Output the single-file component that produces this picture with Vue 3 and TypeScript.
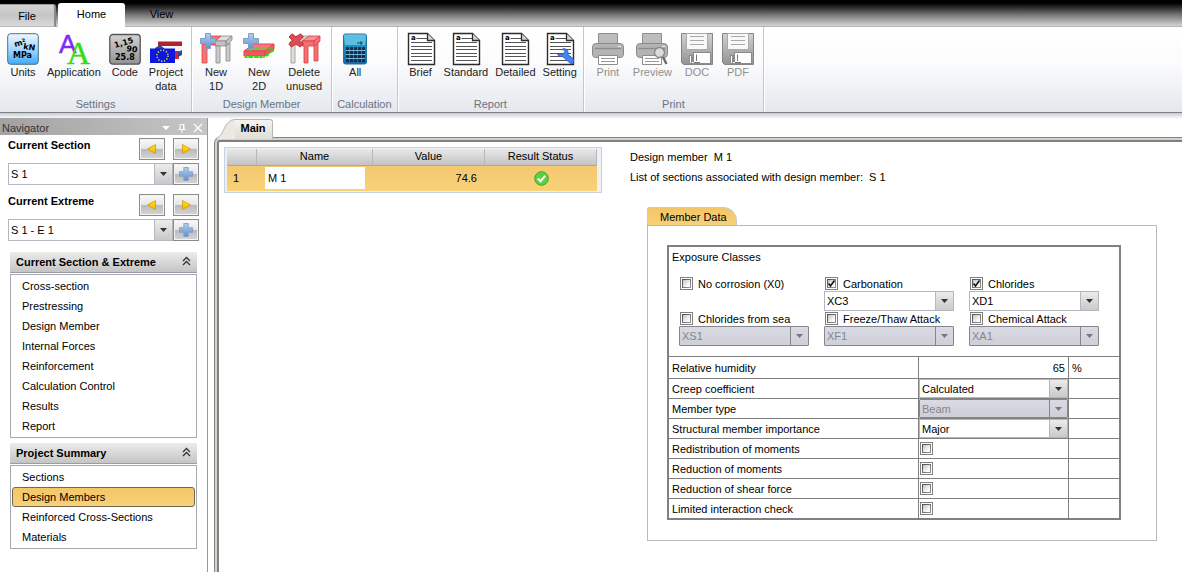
<script setup lang="ts">
import { reactive, ref } from 'vue'

interface Command { icon: string; lines: string[]; disabled?: boolean }
interface Group { title: string; commands: Command[]; spacing?: string }

const groups: Group[] = [
  {
    title: 'Settings',
    commands: [
      { icon: 'units', lines: ['Units'] },
      { icon: 'application', lines: ['Application'] },
      { icon: 'code', lines: ['Code'] },
      { icon: 'project', lines: ['Project', 'data'] },
    ],
  },
  {
    title: 'Design Member',
    spacing: 'wide',
    commands: [
      { icon: 'new1d', lines: ['New', '1D'] },
      { icon: 'new2d', lines: ['New', '2D'] },
      { icon: 'delete', lines: ['Delete', 'unused'] },
    ],
  },
  { title: 'Calculation', commands: [{ icon: 'calculator', lines: ['All'] }] },
  {
    title: 'Report',
    spacing: 'narrow',
    commands: [
      { icon: 'document', lines: ['Brief'] },
      { icon: 'document', lines: ['Standard'] },
      { icon: 'document', lines: ['Detailed'] },
      { icon: 'setting', lines: ['Setting'] },
    ],
  },
  {
    title: 'Print',
    spacing: 'loose',
    commands: [
      { icon: 'printer', lines: ['Print'], disabled: true },
      { icon: 'preview', lines: ['Preview'], disabled: true },
      { icon: 'floppy', lines: ['DOC'], disabled: true },
      { icon: 'floppy', lines: ['PDF'], disabled: true },
    ],
  },
]

const selectors = [
  { id: 'section', label: 'Current Section', value: 'S 1' },
  { id: 'extreme', label: 'Current Extreme', value: 'S 1 - E 1' },
]

const menus = reactive([
  {
    title: 'Current Section & Extreme',
    open: true,
    items: ['Cross-section', 'Prestressing', 'Design Member', 'Internal Forces', 'Reinforcement', 'Calculation Control', 'Results', 'Report'],
  },
  {
    title: 'Project Summary',
    open: true,
    items: ['Sections', 'Design Members', 'Reinforced Cross-Sections', 'Materials'],
  },
])
const current = ref('Design Members')
const memberName = ref('M 1')

const exposures = reactive([
  { id: 'x0', label: 'No corrosion (X0)', on: false, value: '' },
  { id: 'xc', label: 'Carbonation', on: true, value: 'XC3' },
  { id: 'xd', label: 'Chlorides', on: true, value: 'XD1' },
  { id: 'xs', label: 'Chlorides from sea', on: false, value: 'XS1' },
  { id: 'xf', label: 'Freeze/Thaw Attack', on: false, value: 'XF1' },
  { id: 'xa', label: 'Chemical Attack', on: false, value: 'XA1' },
])

const humidity = ref('65')
const choices = [
  { id: 'creep', label: 'Creep coefficient', value: 'Calculated', disabled: false },
  { id: 'type', label: 'Member type', value: 'Beam', disabled: true },
  { id: 'importance', label: 'Structural member importance', value: 'Major', disabled: false },
]
const flags = reactive([
  { id: 'redist', label: 'Redistribution of moments', on: false },
  { id: 'redmom', label: 'Reduction of moments', on: false },
  { id: 'redshear', label: 'Reduction of shear force', on: false },
  { id: 'limited', label: 'Limited interaction check', on: false },
])
</script>

<template>
  <div class="app">
    <svg class="defs" width="0" height="0" aria-hidden="true">
      <defs>
        <linearGradient id="gBlue" x1="0" y1="0" x2="0" y2="1"><stop offset="0" stop-color="#eef8ff" /><stop offset="0.5" stop-color="#a5d8ff" /><stop offset="1" stop-color="#3fa9fb" /></linearGradient>
        <linearGradient id="gGrey" x1="0" y1="0" x2="0" y2="1"><stop offset="0" stop-color="#d2d2d2" /><stop offset="1" stop-color="#929292" /></linearGradient>
        <linearGradient id="gPlus" x1="0" y1="0" x2="0" y2="1"><stop offset="0" stop-color="#b4cfee" /><stop offset="1" stop-color="#6090cb" /></linearGradient>
        <linearGradient id="gCalc" x1="0" y1="0" x2="0" y2="1"><stop offset="0" stop-color="#7fd0ea" /><stop offset="0.35" stop-color="#1f93c4" /><stop offset="1" stop-color="#1565a8" /></linearGradient>
        <linearGradient id="gGold" x1="0" y1="0" x2="0" y2="1"><stop offset="0" stop-color="#ffe600" /><stop offset="1" stop-color="#f5b400" /></linearGradient>
        <g id="sheet">
          <path d="M3.500 .5H22.500L29.500 7.500V31.500H3.500Z" fill="#fff" stroke="#2b2b2b" stroke-width="1.400" />
          <path d="M22.500 .5V7.500H29.500" fill="#d8d8d8" stroke="#2b2b2b" stroke-width="1.300" />
          <path d="M11.500 5.500H22M6 9.500H27M6 13.500H27M6 16.500H27M6 20.500H27M6 23.500H27M6 27.500H27" stroke="#555" />
        </g>
        <g id="printerShape">
          <path d="M6.500 .5H25.500V11H6.500Z" fill="#bcbcbc" stroke="#8d8d8d" />
          <path d="M4 10.500H28Q31.500 10.500 31.500 14V21Q31.500 24.500 28 24.500H4Q.5 24.500 .5 21V14Q.5 10.500 4 10.500Z" fill="#b4b4b4" stroke="#8a8a8a" />
          <path d="M2.500 15.500H29.500" stroke="#8d8d8d" stroke-width="1.400" />
          <path d="M6.500 22.500H25.500V31.500H6.500Z" fill="#fff" stroke="#8d8d8d" />
          <path d="M9 25.500H23M9 28.500H23" stroke="#999" />
          <path d="M26 13.500H29" stroke="#eee" />
        </g>
        <g id="plusShape"><path d="M5.500 .5H10.500V5.500H15.500V10.500H10.500V15.500H5.500V10.500H.5V5.500H5.500Z" fill="url(#gPlus)" stroke="#7f9dc6" /></g>
      </defs>
    </svg>

    <nav class="tabs" aria-label="Ribbon tabs">
      <button type="button" class="tab file">File</button>
      <button type="button" class="tab home">Home</button>
      <button type="button" class="tab view">View</button>
    </nav>

    <header class="ribbon">
      <section v-for="g in groups" :key="g.title" class="group">
        <div class="commands" :class="g.spacing">
          <button v-for="c in g.commands" :key="c.lines[0]" type="button" class="command" :disabled="c.disabled">
            <svg width="32" height="32" viewBox="0 0 32 32" aria-hidden="true">
              <g v-if="c.icon === 'units'" class="glyphs">
                <rect x=".7" y=".7" width="30.600" height="30.600" rx="3" fill="url(#gBlue)" stroke="#4c7186" />
                <text x="8" y="14" transform="rotate(-16 8 14)">m²</text>
                <text x="16" y="16" transform="rotate(8 16 16)">kN</text>
                <text x="6" y="25">MPa</text>
              </g>
              <g v-else-if="c.icon === 'application'">
                <text x="1" y="20" class="sans-a">A</text>
                <text x="9" y="31" class="serif-a">A</text>
              </g>
              <g v-else-if="c.icon === 'code'" class="glyphs">
                <rect x=".8" y="1.500" width="30.400" height="29.700" rx="3" fill="url(#gGrey)" stroke="#555" stroke-width="1.300" />
                <text x="6" y="15" transform="rotate(-16 6 15)">1,15</text>
                <text x="17" y="18" transform="rotate(9 17 18)">90</text>
                <text x="6" y="27">25.8</text>
              </g>
              <g v-else-if="c.icon === 'project'">
                <path d="M8 8.500H32V13H8Z" fill="#b0222f" /><path d="M11 13H32V18H11Z" fill="#f3f3f3" />
                <path d="M26 18H29V26H25V18Z" fill="#d8222f" /><path d="M28 19L32 17V22L28 24Z" fill="#244a9b" />
                <path d="M5 15L10 12L15 16V18H5Z" fill="#244a9b" />
                <path d="M0 15.500H25V30H0Z" fill="#0d18dc" />
                <circle cx="12.500" cy="22.700" r="5.500" fill="none" stroke="#e8dd3c" stroke-width="1.500" stroke-dasharray="1.200 1.680" />
              </g>
              <g v-else-if="c.icon === 'new1d'">
                <path d="M15 8L21 3H32L26 8Z" fill="#ddd" stroke="#8b8b8b" stroke-width=".8" />
                <path d="M15 8H26V13H15ZM26 8L32 3V7L26 13Z" fill="#c2c2c2" stroke="#888" stroke-width=".8" />
                <path d="M16 13H20V30H16ZM26 13L30 10V28H26Z" fill="#cacaca" stroke="#888" stroke-width=".8" />
                <path d="M2 9L8 3H21L15 8V12H7V30H2Z" fill="#f57377" stroke="#d8444b" stroke-width=".8" />
                <path d="M2 11H15" stroke="#d8444b" />
                <use href="#plusShape" />
              </g>
              <g v-else-if="c.icon === 'new2d'">
                <path d="M1 18L11 11H31L22 18Z" fill="#f57a7e" stroke="#e04850" />
                <path d="M1 18H22V23H1ZM22 18L31 11V16L22 23Z" fill="#f0585f" stroke="#e04850" />
                <path d="M7 18L12 15H30M2 24H22L31 17" stroke="#33e51b" fill="none" stroke-width="1.400" stroke-dasharray="2 1" />
                <path d="M1 25L3 22L5 25ZM6 25L8 22L10 25ZM11 25L13 22L15 25ZM16 25L18 22L20 25ZM22 23L24 20L26 23ZM27 19L29 16L31 19Z" fill="#25e00f" />
                <use href="#plusShape" />
              </g>
              <g v-else-if="c.icon === 'delete'">
                <path d="M2 9L8 3H22L16 8V12H7V30H3V12H2Z" fill="#e2dfd9" stroke="#96938d" stroke-width=".8" />
                <path d="M14 8L21 3H32L26 8Z" fill="#fa9295" stroke="#d53e45" stroke-width=".8" />
                <path d="M14 8H26L32 3V8L30 10V28H26V13H20V30H16V13H14Z" fill="#f66f74" stroke="#d53e45" stroke-width=".8" />
                <path d="M26 8V13L32 8" fill="none" stroke="#d53e45" stroke-width=".8" />
                <path d="M1 4L4 .8L8 4L12.500 .8L15.500 4L11.500 7.500L15.500 11L12 14L8 10.800L3.500 14L.8 11L4.500 7.500Z" fill="#dc4c52" stroke="#b83238" />
              </g>
              <g v-else-if="c.icon === 'calculator'">
                <rect x="4.500" y="1" width="23" height="30" rx="2" fill="url(#gCalc)" stroke="#1a74a4" />
                <path d="M6 2.500H26V12H6Z" fill="#5cbfe0" /><path d="M18 10H24M22 8V12" stroke="#0f4568" />
                <g fill="#12304e">
                  <template v-for="r in 4" :key="r">
                    <rect v-for="k in 5" :key="k" :x="3 + k * 4" :y="10 + r * 4" width="3" height="3" rx=".6" />
                  </template>
                </g>
                <path d="M7 17.500H26M7 21.500H26M7 25.500H26" stroke="#9fd0e6" stroke-width=".7" />
              </g>
              <g v-else-if="c.icon === 'document'">
                <use href="#sheet" /><text x="6" y="7" class="doc-a">a</text>
              </g>
              <g v-else-if="c.icon === 'setting'">
                <use href="#sheet" /><text x="6" y="7" class="doc-a">a</text>
                <path d="M13.500 21Q14.500 24 18.500 23.500L26.500 30.500H29.500V26L24 21.500Q25 17 20.500 15.500L18.500 16L21 18.500L19 21.500Z" fill="#4583f2" stroke="#2a55b8" stroke-width=".8" />
              </g>
              <use v-else-if="c.icon === 'printer'" href="#printerShape" />
              <g v-else-if="c.icon === 'preview'">
                <use href="#printerShape" />
                <path d="M27 24L30.500 31" stroke="#696969" stroke-width="2.400" />
                <circle cx="23.500" cy="19.500" r="5" fill="#dcdcdc" stroke="#888" stroke-width="1.400" />
              </g>
              <g v-else>
                <path d="M.5 .5H31.500V31.500H2.500L.5 29.500Z" fill="url(#gGrey)" stroke="#858585" />
                <path d="M5.500 .5H26.500V16.500H5.500Z" fill="#f8f8f8" stroke="#aaa" />
                <path d="M9 3.500H23M9 7.500H23M9 11.500H23" stroke="#aaa" />
                <path d="M8 22H12V19H30V31H8Z" fill="#8b8b8b" />
                <path d="M13 20H29V30H13Z" fill="#fff" />
                <path d="M9.500 23V30M15.500 21.500V28M11 29.500H19" stroke="#fff" />
                <path d="M15.500 21.500V28M13 29.500H19" stroke="#777" />
              </g>
            </svg>
            <span v-for="l in c.lines" :key="l">{{ l }}</span>
          </button>
        </div>
        <h2>{{ g.title }}</h2>
      </section>
    </header>

    <div class="body">
      <aside class="navigator">
        <div class="nav-head">
          <span>Navigator</span>
          <button type="button" aria-label="Window menu"><svg width="10" height="10" viewBox="0 0 10 10"><path d="M1 3H9L5 7Z" fill="#fff" /></svg></button>
          <button type="button" aria-label="Pin"><svg width="10" height="10" viewBox="0 0 10 10"><path d="M3 6V1.500H7V6M1.500 6.500H8.500M5 7V10M6.500 1V6" fill="none" stroke="#fff" /></svg></button>
          <button type="button" aria-label="Close"><svg width="10" height="10" viewBox="0 0 10 10"><path d="M1 1L9 9M9 1L1 9" stroke="#fff" stroke-width="1.300" /></svg></button>
        </div>

        <div class="pickers">
          <div v-for="s in selectors" :key="s.id" class="picker">
            <label :for="s.id">{{ s.label }}</label>
            <button type="button" class="tool" aria-label="Previous"><svg width="12" height="12" viewBox="0 0 12 12"><path d="M1.500 6L9.500 1.500V10.500Z" fill="url(#gGold)" stroke="#d09a10" stroke-width=".8" /></svg></button>
            <button type="button" class="tool" aria-label="Next"><svg width="12" height="12" viewBox="0 0 12 12"><path d="M10.500 6L2.500 1.500V10.500Z" fill="url(#gGold)" stroke="#d09a10" stroke-width=".8" /></svg></button>
            <span class="combo tall">
              <select :id="s.id"><option>{{ s.value }}</option></select>
              <svg width="17" height="10" viewBox="0 0 17 10" aria-hidden="true"><path d="M5 3H12L8.500 7Z" /></svg>
            </span>
            <button type="button" class="tool add" aria-label="Add"><svg width="14" height="14" viewBox="0 0 16 16"><use href="#plusShape" /></svg></button>
          </div>
        </div>

        <section v-for="m in menus" :key="m.title" class="menu">
          <button type="button" class="menu-head" :aria-expanded="m.open" @click="m.open = !m.open">
            {{ m.title }}
            <svg width="9" height="12" viewBox="0 0 9 12" aria-hidden="true"><path d="M1 5L4.500 1.500L8 5M1 9L4.500 5.500L8 9" fill="none" stroke="#333" stroke-width="1.300" /></svg>
          </button>
          <ul v-if="m.open">
            <li v-for="i in m.items" :key="i">
              <a href="#" :class="{ current: i === current }" @click.prevent="current = i">{{ i }}</a>
            </li>
          </ul>
        </section>
      </aside>

      <main>
        <div class="doc-tab">
          <svg width="18" height="20" viewBox="0 0 18 20" aria-hidden="true">
            <path d="M0 20V19C7 18 7 .5 18 .5V20Z" fill="#ebe9e4" />
            <path d="M0 19C7 17 7 .5 18 .5" fill="none" stroke="#b9b5ac" />
          </svg>
          <button type="button">Main</button>
        </div>
        <div class="frame">
          <div class="workspace">
            <div class="list">
              <table>
                <colgroup><col class="c-num" /><col class="c-name" /><col class="c-value" /><col class="c-status" /></colgroup>
                <thead>
                  <tr><th></th><th>Name</th><th>Value</th><th>Result Status</th></tr>
                </thead>
                <tbody>
                  <tr>
                    <td>1</td>
                    <td><input v-model="memberName" type="text" aria-label="Name" /></td>
                    <td class="num">74.6</td>
                    <td class="status">
                      <svg width="15" height="15" viewBox="0 0 15 15" role="img" aria-label="Passed"><circle cx="7.500" cy="7.500" r="6.800" fill="#5fce3f" stroke="#3fa52b" /><path d="M3.800 7.500L6.500 10.200L11.200 4.800" fill="none" stroke="#fff" stroke-width="2" /></svg>
                    </td>
                  </tr>
                </tbody>
              </table>
            </div>

            <div class="details">
              <p>Design member&nbsp; M 1</p>
              <p>List of sections associated with design member:&nbsp; S 1</p>

              <section class="member">
                <button type="button" class="member-tab">Member Data</button>
                <div class="panel">
                  <div class="sheet">
                    <h3>Exposure Classes</h3>
                    <div class="exposures">
                      <div v-for="e in exposures" :key="e.id" class="exposure">
                        <label>
                          <span class="tick"><input v-model="e.on" type="checkbox" /><svg v-if="e.on" width="9" height="9" viewBox="0 0 9 9" aria-hidden="true"><path d="M1.500 4.500L3.500 7L7.500 1.500" fill="none" stroke="#111" stroke-width="1.600" /></svg></span>
                          {{ e.label }}
                        </label>
                        <span v-if="e.value" class="combo" :class="{ off: !e.on }">
                          <select :aria-label="e.label + ' class'" :disabled="!e.on"><option>{{ e.value }}</option></select>
                          <svg width="17" height="10" viewBox="0 0 17 10" aria-hidden="true"><path d="M5 3H12L8.500 7Z" /></svg>
                        </span>
                      </div>
                    </div>
                    <table class="props">
                      <colgroup><col /><col class="c-field" /><col class="c-unit" /></colgroup>
                      <tbody>
                        <tr class="first">
                          <td><label for="humidity">Relative humidity</label></td>
                          <td><input id="humidity" v-model="humidity" type="text" class="amount" /></td>
                          <td>%</td>
                        </tr>
                        <tr v-for="c in choices" :key="c.id">
                          <td><label :for="c.id">{{ c.label }}</label></td>
                          <td>
                            <span class="combo cell" :class="{ off: c.disabled }">
                              <select :id="c.id" :disabled="c.disabled"><option>{{ c.value }}</option></select>
                              <svg width="17" height="10" viewBox="0 0 17 10" aria-hidden="true"><path d="M5 3H12L8.500 7Z" /></svg>
                            </span>
                          </td>
                          <td></td>
                        </tr>
                        <tr v-for="f in flags" :key="f.id">
                          <td><label :for="f.id">{{ f.label }}</label></td>
                          <td>
                            <span class="tick"><input :id="f.id" v-model="f.on" type="checkbox" /><svg v-if="f.on" width="9" height="9" viewBox="0 0 9 9" aria-hidden="true"><path d="M1.500 4.500L3.500 7L7.500 1.500" fill="none" stroke="#111" stroke-width="1.600" /></svg></span>
                          </td>
                          <td></td>
                        </tr>
                      </tbody>
                    </table>
                  </div>
                </div>
              </section>
            </div>
          </div>
        </div>
      </main>
    </div>
  </div>
</template>

<style>
body {
  margin: 0;
  background: #fff;
}
</style>

<style scoped>
.app {
  display: flex;
  flex-direction: column;
  min-height: 100vh;
  font: 11px/14px "Liberation Sans", Arial, sans-serif;
  color: #000;
}
.app *,
.app *::before {
  box-sizing: border-box;
}
.defs {
  position: absolute;
}
button,
input,
select {
  margin: 0;
  padding: 0;
  border: 0;
  border-radius: 0;
  background: none;
  font: inherit;
  color: inherit;
}
svg {
  display: block;
  flex: none;
}

/* Ribbon */
.tabs {
  display: flex;
  align-items: flex-end;
  height: 27px;
  background: linear-gradient(#000 3px, #1c1c1c 6px, #787878 15px, #d4d4d4 26px, #b4b4b4 26px);
}
.tab {
  height: 24px;
}
.file {
  width: 56px;
  height: 23px;
  border-top: 1px solid #999;
  border-right: 2px solid #888;
  border-bottom: 1px solid #bbb;
  border-radius: 0 3px 0 0;
  background: linear-gradient(#d4d4d4, #c4c4c4 50%, #dadada);
}
.home {
  width: 67px;
  margin-left: 2px;
  padding-bottom: 2px;
  border-radius: 3px 3px 0 0;
  background: #fff;
}
.view {
  width: 73px;
  padding-bottom: 2px;
}
.ribbon {
  display: flex;
  height: 86px;
  border-bottom: 1px solid #7c8086;
  background: linear-gradient(#fff, #fcfcfd 40%, #e4e8ee);
}
.group {
  display: flex;
  flex-direction: column;
  justify-content: space-between;
  padding: 6px 0 1px;
  border-right: 1px solid #c3c7cd;
  box-shadow: 1px 0 #fff;
}
.commands {
  display: flex;
  align-items: flex-start;
  gap: 8px;
  padding: 0 8px 0 7px;
}
.commands.narrow {
  gap: 7px;
  padding: 0 6px 0 7px;
}
.commands.wide {
  gap: 11px;
  padding: 0 9px 0 8px;
}
.commands.loose {
  gap: 9px;
  padding: 0 9px 0 8px;
}
.command {
  display: flex;
  flex-direction: column;
  align-items: center;
  min-width: 32px;
  color: #222;
}
.command svg {
  overflow: visible;
}
.command:disabled {
  color: #909090;
}
.group h2 {
  margin: 0;
  padding: 0 5px;
  font-size: 11px;
  font-weight: normal;
  text-align: center;
  color: #6b7280;
}
.glyphs {
  font: bold 8px "DejaVu Sans", sans-serif;
}
.sans-a {
  font: 26px "Liberation Sans", Arial, sans-serif;
  fill: #7e2cf5;
  stroke: #7e2cf5;
  stroke-width: 0.5;
}
.serif-a {
  font: 32px "Liberation Serif", serif;
  fill: #35dc12;
  stroke: #35dc12;
  stroke-width: 0.5;
}
.doc-a {
  font: bold 7px "DejaVu Sans", sans-serif;
}

/* Navigator */
.body {
  display: flex;
  flex: 1;
  padding-top: 5px;
  background: linear-gradient(#c8cbd0, #fff 6px);
}
.navigator {
  flex: none;
  width: 208px;
  border-right: 1px solid #999;
  background: #fff;
}
.nav-head {
  display: flex;
  align-items: center;
  gap: 6px;
  height: 17px;
  padding: 3px 4px 0 2px;
  background: linear-gradient(90deg, #a2a2a2, #c6c6c6);
  color: #333;
}
.nav-head span {
  flex: 1;
}
.pickers {
  display: flex;
  flex-direction: column;
  gap: 9px;
  padding: 3px 8px 11px;
}
.picker {
  display: grid;
  grid-template-columns: 131px 34px 26px;
  row-gap: 3px;
}
.picker label {
  font-weight: bold;
}
.tool {
  display: flex;
  align-items: center;
  justify-content: center;
  width: 26px;
  height: 22px;
  border: 1px solid #8c8c8c;
  background: linear-gradient(#fafafa, #e4e4e4 50%, #b9b9b9 50%, #d6d6d6);
  box-shadow: inset 0 0 0 1px #f4f4f4;
}
.combo {
  display: grid;
  grid-template-columns: 1fr 17px;
  align-items: center;
  height: 20px;
  border: 1px solid #b5b7c0;
  background: linear-gradient(#b5b7c0, #b5b7c0) right 17px top / 1px 100% no-repeat, linear-gradient(#ececec, #c9c9c9) right / 17px 100% no-repeat, #fff;
}
.combo select {
  grid-area: 1 / 1 / 2 / 3;
  width: 100%;
  height: 100%;
  padding-left: 2px;
  appearance: none;
  outline: 0;
}
.combo svg {
  grid-area: 1 / 2;
  fill: #333;
  pointer-events: none;
}
.combo.tall {
  grid-column: 1 / 3;
  height: 22px;
}
.combo.off {
  border-color: #85858c;
  background: linear-gradient(#85858c, #85858c) right 17px top / 1px 100% no-repeat, linear-gradient(#dadae4, #cfcfd8);
  border-radius: 1px;
}
.combo.off select {
  color: #85858c;
  opacity: 1;
}
.combo.off svg {
  fill: #77777c;
}
.menu {
  margin: 0 10px 5px;
}
.menu-head {
  display: flex;
  align-items: center;
  justify-content: space-between;
  width: 187px;
  height: 21px;
  padding: 0 6px;
  border-bottom: 1px solid #9a9da6;
  background: linear-gradient(#ececec, #c4c4c4);
  font-weight: bold;
}
.menu ul {
  margin: 1px 0 0;
  padding: 1px;
  border: 1px solid #a6a9b2;
  list-style: none;
}
.menu a {
  display: block;
  padding: 2px 9px;
  border: 1px solid transparent;
  border-radius: 3px;
  color: inherit;
  text-decoration: none;
}
.menu a.current {
  border-color: #76684c;
  background: linear-gradient(#f4c768, #f8d078);
}

/* Document area */
main {
  display: flex;
  flex: 1;
  flex-direction: column;
  min-width: 0;
  padding: 1px 0 0 6px;
}
.doc-tab {
  position: relative;
  display: flex;
  height: 20px;
  margin: 0 0 -2px 3px;
}
.doc-tab button {
  width: 38px;
  padding: 0 6px 4px 5px;
  border-top: 1px solid #b9b5ac;
  border-right: 1px solid #b9b5ac;
  border-radius: 0 3px 0 0;
  background: linear-gradient(#f4f3f0, #e0ddd6);
  font-weight: bold;
}
.frame {
  display: flex;
  flex: 1;
  padding: 2px 0 0 2px;
  border: solid #858585;
  border-width: 1px 0 0 1px;
  border-radius: 6px 0 0 0;
  background: #d6d2c8;
}
.workspace {
  display: flex;
  flex: 1;
  align-items: flex-start;
  gap: 28px;
  min-width: 0;
  padding: 5px;
  border: solid #808080;
  border-width: 2px 0 0 2px;
  border-radius: 3px 0 0 0;
  background: #fff;
}
.list {
  flex: none;
  padding: 1px 4px 1px 2px;
  border: 1px solid #c6d1e2;
  background: #eef0f4;
}
.list table {
  width: 370px;
  border-spacing: 0;
  table-layout: fixed;
}
.c-num {
  width: 30px;
}
.c-name {
  width: 116px;
}
.c-value {
  width: 112px;
}
.list th {
  height: 17px;
  padding: 0 0 2px;
  border-right: 1px solid #b4b7be;
  border-bottom: 1px solid #a4a8b2;
  background: linear-gradient(#e9e9e9, #c3c3c3);
  font-weight: normal;
}
.list td {
  height: 25px;
  padding: 0 8px 1px;
  background: linear-gradient(#f3c871, #fad277);
}
.list td:first-child {
  padding: 0 6px 1px;
}
.list td input {
  display: block;
  width: 100%;
  height: 22px;
  padding: 0 3px 1px;
  background: #fff;
}
.list td.num {
  text-align: right;
}
.status svg {
  margin: 0 auto;
}
.details {
  flex: 1;
  min-width: 0;
  padding: 3px 20px 0 0;
}
.details p {
  margin: 0 0 6px;
}
.member {
  margin: 23px 0 0 17px;
}
.member-tab {
  display: block;
  height: 18px;
  padding: 0 9px 0 12px;
  border: solid #c3cbd8;
  border-width: 1px 1px 0;
  border-radius: 2px 14px 0 0;
  background: linear-gradient(#f3c567, #f8d07a);
}
.panel {
  padding: 19px 35px 20px 19px;
  border: 1px solid #b8b9c2;
}
.sheet {
  border: 2px solid #808080;
}
.sheet h3 {
  margin: 0;
  padding: 3px 3px 0;
  font-size: 11px;
  font-weight: normal;
}
.exposures {
  display: grid;
  grid-template-columns: repeat(3, 145px);
  grid-template-rows: 35px 35px;
  padding: 12px 0 10px 10px;
}
.exposure {
  width: 130px;
}
.exposure label {
  display: flex;
  align-items: center;
  gap: 5px;
  height: 15px;
  padding-left: 1px;
  white-space: nowrap;
}
.tick {
  display: grid;
  width: 13px;
  height: 13px;
  place-items: center;
}
.tick input {
  grid-area: 1 / 1;
  width: 13px;
  height: 13px;
  appearance: none;
  border: 1px solid #7f7f7f;
  background: linear-gradient(135deg, #c4c4c4, #fff 80%) center / 7px 7px no-repeat, linear-gradient(135deg, #4a4a4a, #9a9a9a) center / 9px 9px no-repeat, #fff;
}
.tick svg {
  grid-area: 1 / 1;
  pointer-events: none;
}
.props {
  width: 100%;
  border-spacing: 0;
  table-layout: fixed;
}
.c-field {
  width: 150px;
}
.c-unit {
  width: 51px;
}
.props td {
  height: 20px;
  padding: 0;
  border-top: 1px solid #808080;
  border-left: 1px solid #808080;
}
.props .first td {
  height: 22px;
}
.props td:first-child {
  padding-left: 3px;
  border-left: 0;
}
.props td:last-child {
  padding-left: 3px;
}
.props .tick {
  margin-left: 1px;
}
.amount {
  display: block;
  width: 100%;
  padding-right: 3px;
  text-align: right;
}
.combo.cell {
  height: 19px;
}
</style>
